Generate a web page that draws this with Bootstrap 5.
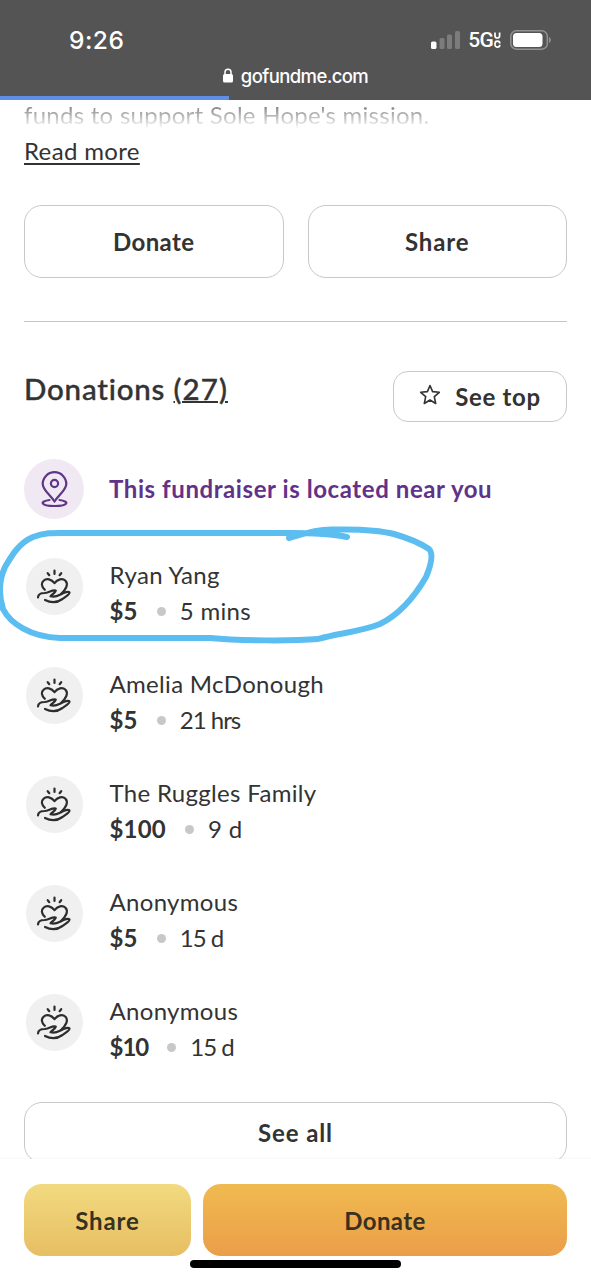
<!DOCTYPE html>
<html lang="en">
<head>
<meta charset="utf-8">
<meta name="viewport" content="width=device-width, initial-scale=1">
<title>gofundme.com</title>
<link href="https://cdn.jsdelivr.net/npm/bootstrap@5.3.0/dist/css/bootstrap.min.css" rel="stylesheet">
<style>
  body { font-family: Lato, "Liberation Sans", sans-serif; font-size: 24px; line-height: 36px; color: #333; background: #fff; }
  .phone { height: 1280px; }
  .browser-top { height: 100px; background: #545454; color: #fff; font-family: Inter, sans-serif; }
  .status-row { height: 24px; margin-top: 28px; padding: 0 39px 0 69px; }
  .clock { font-size: 24.5px; font-weight: 500; line-height: 24px; letter-spacing: .5px; }
  .net { font-family: Roboto, sans-serif; font-size: 21px; font-weight: 500; line-height: 24px; letter-spacing: -.7px; }
  .url-row { height: 44px; padding-top: 3px; font-size: 18.5px; font-weight: 500; line-height: 44px; letter-spacing: -.6px; }
  .load-bar { height: 4px; width: 229px; background: #5f8ee6; }
  .page-body { height: 1059px; padding: 0 24px; }
  .story-fade { height: 32px; line-height: 30px; letter-spacing: .27px; background: linear-gradient(#858585 20%, #fff 90%); -webkit-background-clip: text; background-clip: text; color: transparent; }
  .more-row { height: 73px; padding-top: 1px; }
  .more { color: #333; letter-spacing: .35px; text-underline-offset: 3px; text-decoration-thickness: 1.5px; }
  .action { --bs-btn-color: #333; --bs-btn-border-color: #c8c8c8; --bs-btn-border-radius: 18px; --bs-btn-font-size: 24px; --bs-btn-font-weight: 700; --bs-btn-padding-y: 0; border-width: 1.5px; height: 73px; letter-spacing: .4px; }
  .wide-text { letter-spacing: .9px; }
  .rule { height: 1px; background: #c6c6c6; margin-top: 43px; }
  .title-row { margin-top: 49px; }
  .title { font-size: 29.5px; font-weight: 500; line-height: 36px; letter-spacing: .8px; -webkit-text-stroke: .4px #333; }
  .title u { letter-spacing: 1.1px; text-decoration-thickness: 2px; }
  .small-action { width: 174px; height: 51px; --bs-btn-border-radius: 15px; gap: 14px; letter-spacing: .7px; }
  .near { height: 60px; margin-top: 37px; gap: 25px; color: #62318a; font-weight: 700; letter-spacing: .58px; }
  .pin-disc { width: 60px; height: 60px; background: #f0e9f4; }
  .donors { padding-top: 39px; }
  .donor { height: 109px; gap: 26px; padding-left: 2px; letter-spacing: .32px; }
  .donor-text { margin-top: -1px; padding-left: .5px; }
  .donor b { letter-spacing: .2px; }
  .donor .tight { letter-spacing: -1px; }
  .disc { width: 57px; height: 57px; background: #f0f0f0; }
  .dot { width: 9px; height: 9px; background: #c8c8c8; margin: 1px 14px 0 19px; }
  .see-all { height: 61px; margin-top: -1px; }
  .bottom-bar { height: 121px; padding: 25px 24px 0; background: #fff; box-shadow: 0 -1px 3px rgba(0,0,0,.04); }
  .fill { border: 0; height: 72px; padding-top: 1px; }
  .fill-share { width: 167px; background: linear-gradient(#f2da80, #e7be62); color: #38311f; }
  .fill-donate { background: linear-gradient(#f0ba50, #eb9e4a); color: #38311f; }
  .home-bar { width: 211px; height: 8px; background: #000; margin: 4px auto 0; }
  .marker { left: 0; top: 520px; }
</style>
</head>
<body>
<svg class="d-none">
  <symbol id="gift" viewBox="0 0 57 57">
    <g fill="none" stroke="#2d2d2d" stroke-width="2.2" stroke-linecap="round" stroke-linejoin="round">
      <path d="M28.500 12.500v3.500M21.700 15.200l1.600 2M35.200 15.200l-1.600 2"/>
      <path d="M18.800 31.800C15 28 15.200 24.800 17.500 22.800C20.500 20 25.500 20.900 28.500 25.200C31.500 20.900 36.600 20 39.500 22.800C42.700 26.200 40 31.500 35 36"/>
      <path d="M12 39.500C12.200 36 15.500 35 18.500 35C22.500 34.900 25.500 31.800 29.800 32.500C28.500 36 26 36 24.500 38.300C29.500 39.800 32 37.800 35 36.200C38 34.500 42.600 32.800 43.500 34.600C43.700 36.500 39.500 38.500 36.500 41C31 45 24.500 44.800 19 42"/>
    </g>
  </symbol>
</svg>
<main class="phone position-relative overflow-hidden d-flex flex-column">
  <header class="browser-top d-flex flex-column flex-shrink-0">
    <div class="status-row d-flex align-items-center">
      <span class="clock">9:26</span>
      <svg class="ms-auto" width="31" height="20" viewBox="0 0 31 20"><rect x="2" y="11.500" width="5.500" height="7.500" rx="1.600" fill="#fff"/><g fill="#7c7c7c"><rect x="10.500" y="8" width="5" height="11" rx="1.500"/><rect x="18" y="4.500" width="5" height="14.500" rx="1.500"/><rect x="26" y="1" width="5" height="18" rx="1.500"/></g></svg>
      <span class="net ms-1 ps-1 d-flex">5G<svg width="9" height="24" viewBox="0 0 9 24" fill="none" stroke="#fff" stroke-width="1.700"><path d="M2 4.500v3.200a2.300 2.300 0 0 0 4.600 0V4.500M6.800 15.500a2.400 2.400 0 0 0-4.800 0v1.200a2.400 2.400 0 0 0 4.800 0"/></svg></span>
      <svg class="ms-2" width="42" height="20" viewBox="0 0 42 20"><rect x=".8" y=".8" width="36.500" height="18.400" rx="5.500" fill="none" stroke="#929292" stroke-width="1.500"/><rect x="3" y="3" width="29.500" height="14" rx="3.500" fill="#fff"/><path d="M39 7c2.400.8 2.400 5.200 0 6z" fill="#929292"/></svg>
    </div>
    <div class="url-row d-flex justify-content-center align-items-center">
      <svg class="me-2" width="10" height="15" viewBox="0 0 10 15"><rect y="6" width="10" height="8.500" rx="1.600" fill="#fff"/><path d="M2 7V4.200a3 3 0 0 1 6 0V7" fill="none" stroke="#fff" stroke-width="1.500"/></svg>
      <span>gofundme.com</span>
    </div>
    <div class="load-bar"></div>
  </header>

  <section class="page-body flex-shrink-0 overflow-hidden">
    <div class="story-fade">funds to support Sole Hope's mission.</div>
    <div class="more-row"><a class="more" href="#">Read more</a></div>
    <div class="row g-0 gap-4 flex-nowrap">
      <div class="col"><button class="btn action w-100">Donate</button></div>
      <div class="col"><button class="btn action wide-text w-100">Share</button></div>
    </div>
    <div class="rule"></div>
    <div class="title-row d-flex justify-content-between align-items-start">
      <h2 class="title mb-0">Donations <u>(27)</u></h2>
      <button class="btn action small-action d-flex align-items-center justify-content-center"><svg class="mb-1" width="22" height="22" viewBox="0 0 22 22" fill="none" stroke="#333" stroke-width="1.600" stroke-linejoin="round"><path d="M11 1.500L13.600 7.600L20.300 8.300L15.300 12.700L16.700 19.500L11 16L5.300 19.500L6.700 12.700L1.700 8.300L8.400 7.600z"/></svg><span>See top</span></button>
    </div>
    <div class="near d-flex align-items-center">
      <div class="pin-disc rounded-circle"><svg class="d-block" width="60" height="60" viewBox="0 0 60 60" fill="none" stroke="#5f3585" stroke-width="2.200" stroke-linecap="round" stroke-linejoin="round"><path d="M30.500 42.500C26 35.500 18.700 31 18.700 25a11.800 11.800 0 0 1 23.600 0C42.300 31 35 35.500 30.500 42.500z"/><circle cx="30.500" cy="24.500" r="3.600"/><path d="M25.500 41C15.500 42.300 16 46.800 30.500 47C45 46.800 45.500 42.300 35.500 41"/></svg></div>
      <span>This fundraiser is located near you</span>
    </div>
    <div class="donors">
      <div class="donor d-flex"><svg class="disc rounded-circle flex-shrink-0"><use href="#gift"/></svg><div class="donor-text"><div>Ryan Yang</div><div class="d-flex align-items-center"><b>$5</b><i class="dot rounded-circle"></i><span>5 mins</span></div></div></div>
      <div class="donor d-flex"><svg class="disc rounded-circle flex-shrink-0"><use href="#gift"/></svg><div class="donor-text"><div>Amelia McDonough</div><div class="d-flex align-items-center"><b>$5</b><i class="dot rounded-circle"></i><span class="tight">21 hrs</span></div></div></div>
      <div class="donor d-flex"><svg class="disc rounded-circle flex-shrink-0"><use href="#gift"/></svg><div class="donor-text"><div>The Ruggles Family</div><div class="d-flex align-items-center"><b>$100</b><i class="dot rounded-circle"></i><span>9 d</span></div></div></div>
      <div class="donor d-flex"><svg class="disc rounded-circle flex-shrink-0"><use href="#gift"/></svg><div class="donor-text"><div>Anonymous</div><div class="d-flex align-items-center"><b>$5</b><i class="dot rounded-circle"></i><span class="tight">15 d</span></div></div></div>
      <div class="donor d-flex"><svg class="disc rounded-circle flex-shrink-0"><use href="#gift"/></svg><div class="donor-text"><div>Anonymous</div><div class="d-flex align-items-center"><b class="tight">$10</b><i class="dot rounded-circle"></i><span class="tight">15 d</span></div></div></div>
    </div>
    <button class="btn action wide-text see-all w-100">See all</button>
  </section>

  <footer class="bottom-bar flex-shrink-0 position-relative">
    <div class="d-flex" style="gap:12px">
      <button class="btn action fill wide-text fill-share">Share</button>
      <button class="btn action fill fill-donate flex-grow-1">Donate</button>
    </div>
    <div class="home-bar rounded-pill"></div>
  </footer>

  <svg class="marker position-absolute" width="450" height="130" viewBox="0 0 450 130" fill="none" stroke="#5bbdf0" stroke-width="6" stroke-linecap="round" stroke-linejoin="round"><path d="M289 18C304 14 316 9 334 9.500C358 9 379 10 394 14C408 18 420 23 429 29C434 34 431 45 426 57C415 76 400 94 380 104C360 112 338 113 318 119C295 121 240 121 210 118H60C30 117 10 103 3 89C-2 73 0 58 5 47C12 35 19 23 33 17C46 12 56 13 70 13H290C315 13 332 14 347 17"/></svg>
</main>
<script src="https://cdn.jsdelivr.net/npm/bootstrap@5.3.0/dist/js/bootstrap.bundle.min.js"></script>
</body>
</html>
